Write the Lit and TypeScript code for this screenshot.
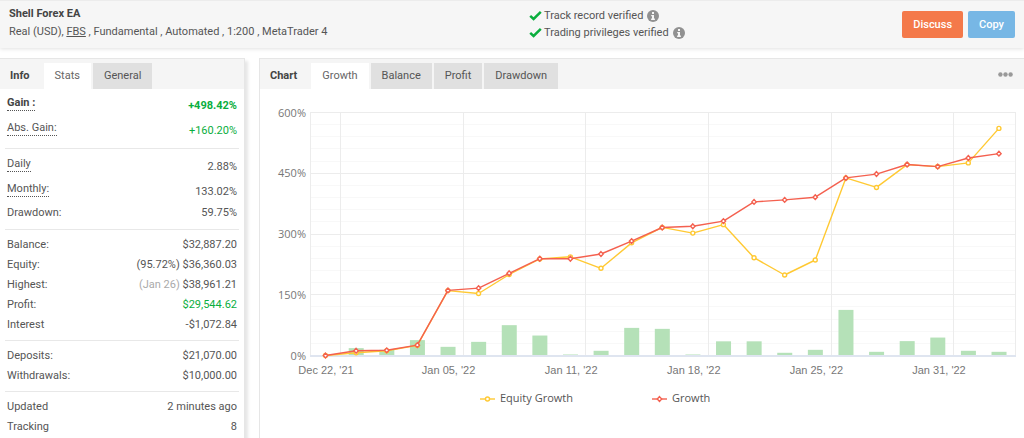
import { LitElement, html, svg, css, nothing } from "lit";
import { customElement, property } from "lit/decorators.js";
import { classMap } from "lit/directives/class-map.js";

interface Stat {
  label: string;
  value: string;
  note?: string;
  noteMuted?: boolean;
  hint?: boolean;
  bold?: boolean;
  positive?: boolean;
}

const STATS: Stat[][] = [
  [
    { label: "Gain :", value: "+498.42%", hint: true, bold: true, positive: true },
    { label: "Abs. Gain:", value: "+160.20%", hint: true, positive: true },
  ],
  [
    { label: "Daily", value: "2.88%", hint: true },
    { label: "Monthly:", value: "133.02%", hint: true },
    { label: "Drawdown:", value: "59.75%" },
  ],
  [
    { label: "Balance:", value: "$32,887.20" },
    { label: "Equity:", value: "$36,360.03", note: "(95.72%)" },
    { label: "Highest:", value: "$38,961.21", note: "(Jan 26)", noteMuted: true },
    { label: "Profit:", value: "$29,544.62", positive: true },
    { label: "Interest", value: "-$1,072.84" },
  ],
  [
    { label: "Deposits:", value: "$21,070.00" },
    { label: "Withdrawals:", value: "$10,000.00" },
  ],
  [
    { label: "Updated", value: "2 minutes ago" },
    { label: "Tracking", value: "8" },
  ],
];

const GROWTH = [0, 11.6, 12.8, 25.6, 160.8, 166.3, 203, 239, 239, 250.5, 282.5, 316, 319, 331.8, 379.3, 384.2, 390.9, 438.4, 448, 471.7, 466.5, 487.7, 498.4];
const EQUITY = [0, 6.6, 11.6, 25, 160.3, 153.2, 200, 238.2, 243.6, 215.3, 278.1, 316.2, 302.2, 323.1, 241.4, 198.8, 235.7, 438.4, 415, 471.4, 466.5, 475.6, 560.8];
const BARS = [0, 18.2, 14, 38, 21.4, 33.7, 74.9, 49.3, 2.5, 11.6, 68.2, 65.8, 2.5, 35, 35, 6.7, 14, 112.6, 9.1, 35.5, 44.3, 11.6, 9.1];
const DATES = ["Dec 22, '21", "Jan 05, '22", "Jan 11, '22", "Jan 18, '22", "Jan 25, '22", "Jan 31, '22"];

@customElement("growth-chart")
export class GrowthChart extends LitElement {
  static styles = css`
    :host { display: block; }
    .chart { display: block; width: 100%; height: auto; }
    .minor { stroke: #f8f8f8; }
    .major { stroke: #ececec; }
    .base { stroke: #dfe5f0; stroke-width: 2; }
    .bar { fill: #b5e1b8; }
    .line { fill: none; stroke-width: 1.4; stroke-linejoin: round; }
    .equity { stroke: #ffc933; }
    .growth { stroke: #f4604f; }
    .dot { fill: #fff; stroke-width: 1.4; }
    .ytext { font: 11px "Open Sans", "Noto Sans", sans-serif; fill: #777; text-anchor: end; }
    .xtext { font: 11px "Liberation Sans", Arial, sans-serif; fill: #777; text-anchor: middle; }
    .ltext { font: 11px "Open Sans", "Noto Sans", sans-serif; fill: #555; }
  `;

  private x(i: number) {
    return 64.5 + i * 30.61;
  }

  private y(value: number) {
    return 266.5 - (value * 243) / 600;
  }

  private points(values: number[]) {
    return values.map((v, i) => `${this.x(i).toFixed(1)},${this.y(v).toFixed(1)}`).join(" ");
  }

  private circle(cx: number, cy: number) {
    return svg`<circle class="dot equity" cx=${cx} cy=${cy} r="2"></circle>`;
  }

  private diamond(cx: number, cy: number) {
    return svg`<path class="dot growth" d="M${cx} ${cy - 2.4}l2.2 2.4l-2.2 2.4l-2.2 -2.4z"></path>`;
  }

  render() {
    const rows = Array.from({ length: 20 }, (_, i) => (i + 1) * 30);
    return html`
      <svg class="chart" viewBox="-1 0 764 340" role="img" aria-label="Growth chart">
        ${rows.map((v) => {
          const y = Math.floor(this.y(v)) + 0.5;
          return svg`<line class=${v % 150 ? "minor" : "major"} x1="49" x2="755" y1=${y} y2=${y}></line>`;
        })}
        ${[49.5, 754.5].map((x) => svg`<line class="major" x1=${x} x2=${x} y1="23" y2="267"></line>`)}
        ${DATES.map((_, i) => {
          const x = Math.floor(79.7 + i * 122.6) + 0.5;
          return svg`<line class="major" x1=${x} x2=${x} y1="23" y2="267"></line>`;
        })}
        ${BARS.map((v, i) =>
          v ? svg`<rect class="bar" x=${this.x(i) - 7.4} y=${this.y(v)} width="15" height=${267 - this.y(v)}></rect>` : nothing
        )}
        <line class="base" x1="49" x2="755" y1="267" y2="267"></line>
        <polyline class="line equity" points=${this.points(EQUITY)}></polyline>
        ${EQUITY.map((v, i) => this.circle(this.x(i), this.y(v)))}
        <polyline class="line growth" points=${this.points(GROWTH)}></polyline>
        ${GROWTH.map((v, i) => this.diamond(this.x(i), this.y(v)))}
        ${[0, 150, 300, 450, 600].map((v) => svg`<text class="ytext" x="45" y=${Math.round(this.y(v)) + 4}>${v}%</text>`)}
        ${DATES.map((d, i) => svg`<text class="xtext" x=${65 + i * 122.6} y="285">${d}</text>`)}
        <line class="line equity" x1="219" x2="234" y1="310" y2="310"></line>
        ${this.circle(226.5, 310)}
        <text class="ltext" x="239" y="313">Equity Growth</text>
        <line class="line growth" x1="391" x2="406" y1="310" y2="310"></line>
        ${this.diamond(398.5, 310)}
        <text class="ltext" x="411" y="313">Growth</text>
      </svg>
    `;
  }
}

@customElement("tab-strip")
export class TabStrip extends LitElement {
  @property() heading = "";
  @property({ type: Array }) tabs: string[] = [];

  static styles = css`
    :host {
      display: flex;
      align-items: flex-end;
      height: 30px;
      background: #f5f5f5;
      font: 11px/26px Roboto, sans-serif;
    }
    .heading { margin: 0; padding: 0 14px 0 10px; font-size: 11px; font-weight: 700; color: #444; }
    .tabs { display: flex; gap: 2px; }
    .tab {
      border: 0;
      margin: 0;
      padding: 0 11px;
      height: 26px;
      font: inherit;
      color: #555;
      background: #e0e0e0;
    }
    .active { background: #fff; color: #666; }
    .end { margin-left: auto; align-self: center; padding-right: 11px; display: flex; }
  `;

  render() {
    return html`
      <h2 class="heading">${this.heading}</h2>
      <div class="tabs" role="tablist">
        ${this.tabs.map(
          (t, i) => html`<button
            class=${classMap({ tab: true, active: i === 0 })}
            role="tab"
            aria-selected=${i === 0 ? "true" : "false"}
          >${t}</button>`
        )}
      </div>
      <div class="end"><slot></slot></div>
    `;
  }
}

@customElement("app-root")
export class AppRoot extends LitElement {
  static styles = css`
    :host {
      display: flex;
      flex-direction: column;
      min-height: 100vh;
      box-sizing: border-box;
      background: #fff;
      color: #555;
      font: 11px/18px Roboto, sans-serif;
    }
    .header {
      display: grid;
      grid-template-columns: 520px 1fr auto;
      align-items: start;
      padding: 4px 9px 7px;
      background: #f6f6f6;
      border-top: 1px solid #ececec;
      box-shadow: 0 1px 4px rgba(0, 0, 0, 0.12);
    }
    .title { margin: 0; font-size: 11px; line-height: 18px; font-weight: 700; color: #444; }
    .meta { margin: 0; }
    .broker { color: inherit; text-decoration: underline; }
    .checks { margin: 0; padding: 2px 0 0; list-style: none; line-height: 17px; }
    .check { display: flex; align-items: center; gap: 2px; }
    .tick { width: 13px; height: 11px; }
    .info { width: 12px; height: 12px; margin-left: 2px; }
    .actions { display: flex; gap: 5px; padding-top: 6px; }
    .button {
      border: 0;
      border-radius: 2px;
      margin: 0;
      padding: 0 11px;
      height: 27px;
      font: 500 11px/27px Roboto, sans-serif;
      color: #fff;
    }
    .discuss { background: #f4794a; }
    .copy { background: #77b7e5; }
    .main {
      flex: 1;
      display: grid;
      grid-template-columns: 245px minmax(0, 1fr);
      column-gap: 14px;
      padding-top: 10px;
    }
    .panel { background: #fff; border: 1px solid #e6e6e6; border-bottom: 0; }
    .side { border-left: 0; box-shadow: 3px 3px 3px rgba(0, 0, 0, 0.1); }
    .body { border-right: 0; }
    .group { margin: 0 5px; padding: 5px 2px; border-bottom: 1px solid #e8e8e8; }
    .group:first-of-type { padding-top: 3px; padding-bottom: 6px; }
    .group:nth-of-type(2) { padding-top: 4px; padding-bottom: 6px; }
    .group:last-of-type { border-bottom: 0; padding-bottom: 0; }
    .row { display: flex; justify-content: space-between; height: 20px; line-height: 20px; }
    .tall { height: 25px; line-height: 27px; }
    .tall .label { line-height: 15px; height: 15px; margin-top: 3px; }
    .label { margin: 0; }
    .value { margin: 0; }
    .hint { border-bottom: 1px dotted #555; }
    .bold { font-weight: 700; color: #444; }
    .positive { color: #0aae3e; }
    .muted { color: #aaa; }
    .more { display: flex; padding: 0; border: 0; background: none; }
    .dots { width: 15px; height: 5px; fill: #999; }
  `;

  private check(text: string) {
    return html`<li class="check">
      <svg class="tick" viewBox="0 0 13 11" aria-hidden="true">
        <path d="M1.2 5.8L4.6 9L11.8 1.9" fill="none" stroke="#0aae3e" stroke-width="2.5"></path>
      </svg>
      <span>${text}</span>
      <svg class="info" viewBox="0 0 12 12" aria-hidden="true">
        <circle cx="6" cy="6" r="6" fill="#919191"></circle>
        <path d="M5 2h2v2H5zM4.2 5H7v3.6h.9V10H4.1V8.600H5V6.300H4.200z" fill="#f6f6f6"></path>
      </svg>
    </li>`;
  }

  private row(s: Stat) {
    return html`<div class=${classMap({ row: true, tall: !!s.hint })}>
      <dt class=${classMap({ label: true, hint: !!s.hint, bold: !!s.bold })}>${s.label}</dt>
      <dd class=${classMap({ value: true, bold: !!s.bold, positive: !!s.positive })}>
        ${s.note ? html`<span class=${classMap({ muted: !!s.noteMuted })}>${s.note}</span>` : nothing}
        ${s.value}
      </dd>
    </div>`;
  }

  render() {
    return html`
      <header class="header">
        <div>
          <h1 class="title">Shell Forex EA</h1>
          <p class="meta">Real (USD), <a class="broker" href="#">FBS</a> , Fundamental , Automated , 1:200 , MetaTrader 4</p>
        </div>
        <ul class="checks">
          ${this.check("Track record verified")} ${this.check("Trading privileges verified")}
        </ul>
        <div class="actions">
          <button class="button discuss">Discuss</button>
          <button class="button copy">Copy</button>
        </div>
      </header>
      <main class="main">
        <section class="panel side">
          <tab-strip heading="Info" .tabs=${["Stats", "General"]}></tab-strip>
          ${STATS.map((g) => html`<dl class="group">${g.map((s) => this.row(s))}</dl>`)}
        </section>
        <section class="panel body">
          <tab-strip heading="Chart" .tabs=${["Growth", "Balance", "Profit", "Drawdown"]}>
            <button class="more" aria-label="More options">
              <svg class="dots" viewBox="0 0 15 5" aria-hidden="true">
                <circle cx="2.400" cy="2.500" r="2.200"></circle>
                <circle cx="7.500" cy="2.500" r="2.200"></circle>
                <circle cx="12.600" cy="2.500" r="2.200"></circle>
              </svg>
            </button>
          </tab-strip>
          <growth-chart></growth-chart>
        </section>
      </main>
    `;
  }
}
